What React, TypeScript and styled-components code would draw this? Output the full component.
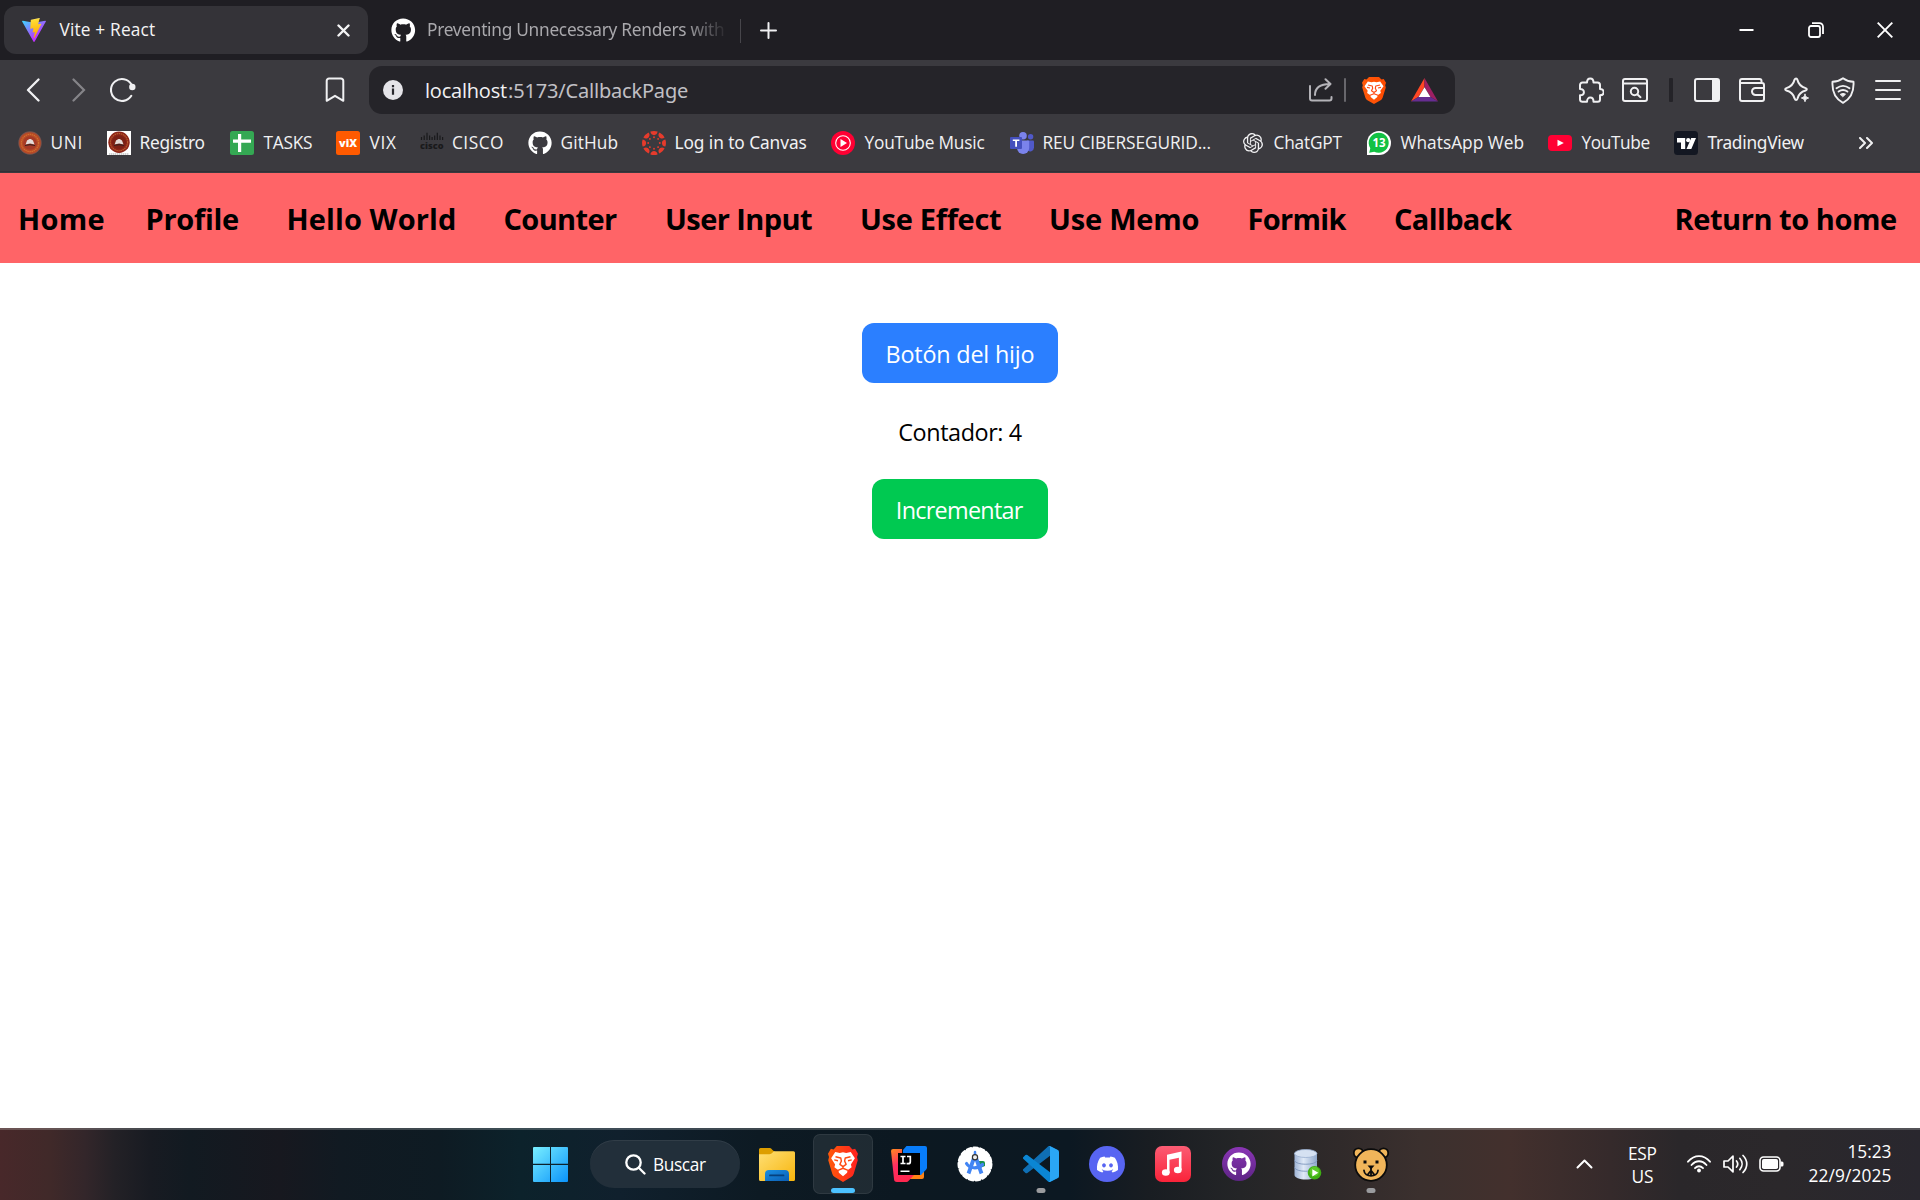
import React, { useLayoutEffect, useRef, useState } from "react";
import styled, { createGlobalStyle } from "styled-components";
import { SiOpenai } from "react-icons/si";
import { FaDiscord, FaGithub } from "react-icons/fa";

const sans = `"Open Sans", "Noto Sans", sans-serif`;
const sansSingleG = `"Noto Sans", "Open Sans", sans-serif`;

const GlobalStyle = createGlobalStyle`
  * { box-sizing: border-box; }
  body { margin: 0; background: #fff; font-family: ${sans}; overflow: hidden; }
  svg { display: block; flex: none; }
`;

/* ---------- text set to an exact visible width ---------- */

const FitBox = styled.span<{ $w: number }>`
  display: block;
  flex: none;
  width: ${(p) => p.$w}px;
  white-space: pre;
`;
const FitRun = styled.span<{ $g?: boolean }>`
  display: inline-block;
  font-family: ${(p) => (p.$g ? sansSingleG : sans)};
`;

function Fit({ text, w, g }: { text: string; w: number; g?: boolean }) {
  const ref = useRef<HTMLSpanElement>(null);
  const [fit, setFit] = useState({ spacing: 0, shift: 0 });
  useLayoutEffect(() => {
    const ctx = document.createElement("canvas").getContext("2d");
    if (!ref.current || !ctx) return;
    const cs = getComputedStyle(ref.current);
    ctx.font = `${cs.fontWeight} ${cs.fontSize} ${cs.fontFamily}`;
    const m = ctx.measureText(text);
    const ink = m.actualBoundingBoxLeft + m.actualBoundingBoxRight;
    setFit({ spacing: (w - ink) / (text.length - 1), shift: m.actualBoundingBoxLeft + 0.5 });
  }, [text, w]);
  return (
    <FitBox $w={w}>
      <FitRun ref={ref} $g={g} style={{ letterSpacing: fit.spacing, marginLeft: fit.shift }}>
        {text}
      </FitRun>
    </FitBox>
  );
}

/* ---------- layout ---------- */

const Screen = styled.div`
  width: 1920px;
  height: 1200px;
  display: flex;
  flex-direction: column;
  background: #fff;
`;

const TabStrip = styled.div`
  height: 60px;
  background: #1f1e23;
  display: flex;
  align-items: center;
  padding-left: 4px;
`;
const Tab = styled.div<{ $active?: boolean; $w: number }>`
  width: ${(p) => p.$w}px;
  height: 48px;
  border-radius: 12px;
  display: flex;
  align-items: center;
  gap: ${(p) => (p.$active ? 13 : 12)}px;
  padding: 0 18px 0 ${(p) => (p.$active ? 18 : 23)}px;
  font-size: 17.3px;
  line-height: 24px;
  background: ${(p) => (p.$active ? "#343338" : "transparent")};
  color: ${(p) => (p.$active ? "#f4f4f5" : "#a9a8ac")};
`;
const TabClose = styled.div`
  margin-left: auto;
`;
const FadeRight = styled.div`
  width: 298px;
  flex: none;
  overflow: hidden;
  mask-image: linear-gradient(to right, #000 86%, transparent 101%);
`;
const TabDivider = styled.div`
  width: 1px;
  height: 24px;
  margin: 1px 19px 0 0;
  background: #47464b;
`;
const WindowButtons = styled.div`
  margin-left: auto;
  display: flex;
  align-items: center;
  padding-right: 1px;
`;
const WindowButton = styled.div`
  width: 69px;
  height: 60px;
  display: grid;
  place-items: center;
`;

const Chrome = styled.div`
  height: 113px;
  background: #3b3a3f;
  display: flex;
  flex-direction: column;
  padding-top: 6px;
`;
const Toolbar = styled.div`
  display: flex;
  align-items: center;
  height: 48px;
  padding-left: 19px;
`;
const ToolSlot = styled.div<{ $w: number; $push?: number }>`
  width: ${(p) => p.$w}px;
  margin-left: ${(p) => p.$push ?? 0}px;
  flex: none;
  display: grid;
  place-items: center;
  color: #f0f0f2;
`;
const AddressBar = styled.div`
  width: 1086px;
  height: 48px;
  flex: none;
  border-radius: 13px;
  background: #252429;
  display: flex;
  align-items: center;
  padding: 0 17px 0 14px;
  font-size: 20px;
  line-height: 26px;
`;
const Url = styled.div`
  display: flex;
  margin-left: 22.500px;
  padding-top: 1px;
  color: #c1c0c5;
`;
const UrlHost = styled.span`
  color: #f1f1f3;
  margin-right: 2px;
`;
const AddressActions = styled.div`
  margin-left: auto;
  display: flex;
  align-items: center;
`;
const Bar = styled.div<{ $w: number; $color: string; $m: string }>`
  width: ${(p) => p.$w}px;
  height: 24px;
  flex: none;
  border-radius: 1px;
  margin: ${(p) => p.$m};
  background: ${(p) => p.$color};
`;
const ToolRight = styled.div`
  display: flex;
  align-items: center;
  margin-left: 119px;
`;

const Bookmarks = styled.div`
  height: 58px;
  display: flex;
  align-items: center;
  padding-left: 18px;
  box-shadow: inset 0 -1px #313036;
  margin-bottom: 1px;
`;
const Bookmark = styled.div<{ $slot: number }>`
  width: ${(p) => p.$slot}px;
  flex: none;
  display: flex;
  align-items: center;
  gap: 9px;
  font-size: 17.3px;
  line-height: 24px;
  color: #f1f1f3;
`;

const PageNav = styled.nav`
  height: 90px;
  background: #ff6467;
  display: flex;
  align-items: center;
  justify-content: space-between;
  padding: 1px 24.500px 0 19.5px;
  font-size: 29px;
  font-weight: 700;
  line-height: 42px;
  color: #000;
`;
const NavLinks = styled.div`
  display: flex;
`;
const NavLink = styled.a<{ $gap?: number }>`
  margin-right: ${(p) => p.$gap ?? 0}px;
`;

const Page = styled.main`
  flex: 1;
  display: flex;
  flex-direction: column;
  align-items: center;
  padding-top: 60px;
  font-size: 23.4px;
  line-height: 36px;
`;
const Button = styled.button<{ $bg: string; $w: number }>`
  width: ${(p) => p.$w}px;
  height: 60px;
  border: 0;
  border-radius: 12px;
  background: ${(p) => p.$bg};
  color: #fff;
  font: inherit;
  display: grid;
  place-items: center;
  padding: 1px 0 0;
`;
const Counter = styled.p`
  margin: 31px 0 29px;
`;

const Taskbar = styled.footer`
  height: 72px;
  border-top: 2px solid rgba(255, 255, 255, 0.2);
  background: linear-gradient(
    to right,
    #48282a 0, #402929 50px, #33262a 85px, #232126 115px, #181b22 150px, #121a21 190px, #17181f 280px,
    #111a22 340px, #0e1b23 440px, #0c222b 520px, #10202d 620px, #0d1a23 760px, #0c1821 900px,
    #0c1822 1070px, #191d22 1150px, #242527 1240px, #302a2a 1340px, #3b302e 1420px,
    #43302d 1510px, #352a2b 1610px, #2a272a 1680px, #2b282b 1780px, #29272e 1920px
  ) border-box;
  display: flex;
  align-items: center;
  padding: 0 30px 2px 520px;
  color: #fff;
`;
const AppSlot = styled.div<{ $active?: boolean; $nudge?: number }>`
  position: relative;
  width: 60px;
  height: 60px;
  flex: none;
  margin-right: 6px;
  padding-left: ${(p) => p.$nudge ?? 0}px;
  border-radius: 7px;
  display: grid;
  place-items: center;
  background: ${(p) => (p.$active ? "rgba(255,255,255,.08)" : "transparent")};
  box-shadow: ${(p) => (p.$active ? "inset 0 0 0 1px rgba(255,255,255,.07)" : "none")};
`;
const Running = styled.i<{ $active?: boolean }>`
  position: absolute;
  bottom: 1px;
  left: 50%;
  transform: translateX(-50%);
  width: ${(p) => (p.$active ? 24 : 9)}px;
  height: 5px;
  border-radius: 3px;
  background: ${(p) => (p.$active ? "#4cc2ff" : "#9a9b9e")};
`;
const SearchPill = styled.div`
  width: 150px;
  height: 48px;
  flex: none;
  margin: 0 7px 0 4px;
  border-radius: 24px;
  background: #222f3a;
  box-shadow: inset 0 1px rgba(255, 255, 255, 0.07);
  display: flex;
  align-items: center;
  gap: 8px;
  padding-left: 34.500px;
  font-size: 17.300px;
`;
const Tray = styled.div`
  margin-left: auto;
  display: flex;
  align-items: center;
  font-size: 17.3px;
`;
const Stack = styled.div<{ $align: string; $lh: number; $m: string }>`
  display: flex;
  flex-direction: column;
  align-items: ${(p) => p.$align};
  line-height: ${(p) => p.$lh}px;
  margin: ${(p) => p.$m};
`;
const TrayIcons = styled.div`
  display: flex;
  align-items: center;
  gap: 11.500px;
`;

/* ---------- icons ---------- */

const Line = ({ w, h = w, sw = 2, children }: { w: number; h?: number; sw?: number; children: React.ReactNode }) => (
  <svg width={w} height={h} viewBox={`0 0 ${w} ${h}`} fill="none" stroke="currentColor" strokeWidth={sw} strokeLinecap="round" strokeLinejoin="round">
    {children}
  </svg>
);

const ViteLogo = () => (
  <svg width="24" height="24" viewBox="0 0 256 257">
    <defs>
      <linearGradient id="va" x1="-.8%" x2="57.6%" y1="7.7%" y2="78.4%"><stop stopColor="#41D1FF" /><stop offset="1" stopColor="#BD34FE" /></linearGradient>
      <linearGradient id="vb" x1="43.4%" x2="50.3%" y1="2.2%" y2="89%"><stop stopColor="#FFEA83" /><stop offset=".08" stopColor="#FFDD35" /><stop offset="1" stopColor="#FFA800" /></linearGradient>
    </defs>
    <path fill="url(#va)" d="M255.153 37.938L134.897 252.976c-2.483 4.44-8.862 4.466-11.382.048L.875 37.958c-2.746-4.814 1.371-10.646 6.827-9.67l120.385 21.517a6.537 6.537 0 0 0 2.322-.004l117.867-21.483c5.438-.991 9.574 4.796 6.877 9.62Z" />
    <path fill="url(#vb)" d="M185.432.063L96.44 17.501a3.268 3.268 0 0 0-2.634 3.014l-5.474 92.456a3.268 3.268 0 0 0 3.997 3.378l24.777-5.718c2.318-.535 4.413 1.507 3.936 3.838l-7.361 36.047c-.495 2.426 1.782 4.5 4.151 3.78l15.304-4.649c2.372-.72 4.652 1.36 4.15 3.788l-11.698 56.621c-.732 3.542 3.979 5.473 5.943 2.437l1.313-2.028l72.516-144.72c1.215-2.423-.88-5.186-3.54-4.672l-25.505 4.922c-2.396.462-4.435-1.77-3.759-4.114l16.646-57.705c.677-2.35-1.37-4.583-3.769-4.113Z" />
  </svg>
);

const Brave = ({ w, h, id }: { w: number; h: number; id: string }) => (
  <svg width={w} height={h} viewBox="0 0 24 28" preserveAspectRatio="none">
    <defs><linearGradient id={id}><stop stopColor="#ff5a0a" /><stop offset="1" stopColor={id === "braveApp" ? "#ff2020" : "#ff4a00"} /></linearGradient></defs>
    <path fill={`url(#${id})`} d="M7 0h10l2.500 2.700 2.200-.5L24 6l-.8 2.500.6 2.500-3.200 10.500a5 5 0 0 1-2 2.600L12 28l-6.600-3.900a5 5 0 0 1-2-2.600L.2 11l.6-2.500L0 6l2.300-3.800 2.200.5z" />
    <path fill="#fff" d="m5.800 4.700 3.700.7 2.500-.6 2.500.6 3.700-.7 3.300 4.800-3.200 4.800.6 2.300-3.300 2.200-.3 2-3.300 2.700-3.300-2.700-.3-2-3.300-2.200.6-2.300-3.200-4.800z" />
    <path fill="none" stroke="#ff4a12" strokeWidth="1.150" strokeLinejoin="round" d="m6 8.300 4.200 1 .5 2.400-1.200 2.600L12 16l2.500-1.700-1.200-2.600.5-2.400 4.200-1M12 16v1.500M8 19l4-1.700 4 1.700M5 10.800l3 .6M19 10.800l-3 .6" />
  </svg>
);

const Bat = () => (
  <svg width="27" height="24" viewBox="0 0 27 24">
    <path d="M13.5 0v9L7.6 18.8 0 23.6z" fill="#ff4724" />
    <path d="M13.5 0 27 23.6l-7.6-4.8L13.5 9z" fill="#9e1f63" />
    <path d="M0 23.6h27l-7.6-4.8H7.6z" fill="#662d91" />
    <path d="m13.5 9.2 5.9 9.8H7.6z" fill="#fff" />
  </svg>
);

const Seal = ({ boxed }: { boxed?: boolean }) => (
  <svg width="24" height="24" viewBox="0 0 24 24">
    {boxed && <path fill="#fff" d="M0 0h24v24H0z" />}
    {!boxed && <circle cx="12" cy="12" r="11.7" fill="#75534f" />}
    <circle cx="12" cy={boxed ? 11.2 : 12} r={boxed ? 10.7 : 10.8} fill={boxed ? "#8d2418" : "#b74a26"} />
    <circle cx="12" cy={boxed ? 11.2 : 12} r="8.6" fill="none" stroke={boxed ? "#b8602f" : "#d0702f"} strokeWidth="1.2" strokeDasharray="1.4 .7" />
    <circle cx="12" cy={boxed ? 11.2 : 12} r="6.8" fill={boxed ? "#7c2115" : "#a63a26"} />
    <path d="M7.6 13.5 9 9.6l2.4-1.5h1.4L15 9.6l1.5 3.9-4.4-.9z" fill="#e4dcd8" />
    <path d="m7 14 5-1 5 1v1l-5-.8-5 .8z" fill="#3d201d" />
    {boxed && <path d="M2 23h20" stroke="#8d8d8d" strokeWidth=".8" strokeDasharray="1.4 .6" />}
  </svg>
);
const Sheets = () => (
  <svg width="24" height="24" viewBox="0 0 24 24"><rect width="24" height="24" rx="2.5" fill="#34a853" /><path d="M8 3h3.200v5.600H21v3.100h-9.800V21H8v-9.300H3V8.600h5z" fill="#fff" /></svg>
);
const Vix = () => (
  <svg width="24" height="24" viewBox="0 0 24 24"><rect width="24" height="24" rx="2.5" fill="#ff5a00" />
    <text x="3" y="15.700" fontFamily="Open Sans" fontWeight="800" fontSize="10" textLength="18" lengthAdjust="spacingAndGlyphs" fill="#fff">viX</text></svg>
);
const Cisco = () => (
  <svg width="24" height="24" viewBox="0 0 24 24" fill="#19191b">
    <path d="M1.500 6v3M4.200 4.500V9M7 4v5M9.600 4.500V9M12.100 6v3M14.700 4.500V9M17.300 4v5M20 4.500V9M22.600 6v3M7 1.800v7M17.300 1.800v7" stroke="#19191b" strokeWidth="1.200" />
    <text x="0" y="18" fontFamily="Open Sans" fontWeight="800" fontSize="9.500" textLength="23.500" lengthAdjust="spacingAndGlyphs">cisco</text>
  </svg>
);
const CanvasLogo = () => (
  <svg width="24" height="24" viewBox="0 0 24 24" fill="#e63b2c">
    {[0, 45, 90, 135, 180, 225, 270, 315].map((a) => (
      <g key={a} transform={`rotate(${a} 12 12)`}>
        <path d="M8.400.600a12 12 0 0 1 7.200 0c-.3 4.700-6.900 4.700-7.200 0z" />
        <circle cx="12" cy="6.200" r=".95" />
      </g>
    ))}
  </svg>
);
const YtMusic = () => (
  <svg width="24" height="24" viewBox="0 0 24 24"><circle cx="12" cy="12" r="12" fill="#ff0033" /><circle cx="12" cy="12" r="7.3" fill="none" stroke="#fff" strokeWidth="1.1" /><path d="m9.500 8.100 6.500 3.900-6.500 3.900z" fill="#fff" /></svg>
);
const Teams = () => (
  <svg width="24" height="24" viewBox="0 0 24 24">
    <circle cx="20.600" cy="5.800" r="2.700" fill="#5059c9" /><path d="M17 9.500h6a1 1 0 0 1 1 1v6a4 4 0 0 1-7 2.600z" fill="#5059c9" />
    <circle cx="13" cy="4.700" r="3.800" fill="#7b83eb" /><path d="M7 9.500h11.200a1 1 0 0 1 1 1V17a6 6 0 0 1-12.200 0z" fill="#7b83eb" />
    <rect y="6" width="12" height="12" rx="1" fill="#4550bd" /><path d="M2.800 8.500h6.600v1.600H7v5.600H5.200v-5.600H2.800z" fill="#fff" />
  </svg>
);
const WhatsApp = () => (
  <svg width="24" height="24" viewBox="0 0 24 24"><path d="M0 24V12A12 12 0 1 1 12 24z" fill="#fff" /><path d="m2.200 21.800 1.100-4.600a10 10 0 1 1 3.900 3.500z" fill="#12c143" />
    <text x="12" y="16" textAnchor="middle" fontFamily="Open Sans" fontWeight="700" fontSize="11.500" fill="#fff">13</text></svg>
);
const YouTube = () => (
  <svg width="24" height="24" viewBox="0 0 24 24"><rect y="4" width="24" height="16" rx="4" fill="#ff0033" /><path d="m9.500 8.700 6.300 3.300-6.300 3.300z" fill="#fff" /></svg>
);
const Trading = () => (
  <svg width="24" height="24" viewBox="0 0 24 24"><rect width="24" height="24" rx="3.500" fill="#131722" /><path d="M3 7h8.200v11H7v-6.500H3zM17.200 7H22l-4.700 11h-4.800z" fill="#fff" /><circle cx="14.200" cy="9.200" r="2.100" fill="#fff" /></svg>
);

const Puzzle = () => (
  <Line w={26}><path d="M2 8a2.500 2.500 0 0 1 2.500-2.500H9C9 0 15.500 0 15.500 5.500h4A2.500 2.500 0 0 1 22 8v4c5 .3 5 6 0 6.300v4.200a2.300 2.300 0 0 1-2.300 2.300h-4.200c0-5.600-6.500-5.600-6.500 0H4.500A2.500 2.500 0 0 1 2 22.500v-4.200c5.200-.3 5.200-6 0-6.300z" /></Line>
);
const WindowSearch = () => (
  <Line w={26} h={24}><rect x="1" y="1" width="24" height="22" rx="2" /><path d="M1 5.500h24" /><circle cx="12.500" cy="13.500" r="3.700" /><path d="m15.500 16.500 3 2.700" /></Line>
);
const SidebarIcon = () => (
  <Line w={26} h={24}><rect x="1" y="1" width="24" height="22" rx="2" /><path d="M19 2h5v20h-5z" fill="currentColor" /></Line>
);
const Wallet = () => (
  <Line w={26} h={24}><path d="M22.500 5V3a2 2 0 0 0-2-2H3a2 2 0 0 0-2 2v18a2 2 0 0 0 2 2h20a2 2 0 0 0 2-2V7a2 2 0 0 0-2-2H2M25 10h-8.500a3.400 3.400 0 0 0 0 7H25" /></Line>
);
const Sparkle = () => (
  <Line w={26} h={26}><path d="M10.500 2.800c.8-1.600 2.400-1.600 2.900 0 1.200 5 3.300 7 8.200 8.300 1.600.5 1.600 1.800 0 2.400-5 1.300-7 3.300-8.200 8.200-.5 1.600-2.100 1.600-2.700 0-1.200-4.900-3.300-6.900-8.300-8.200-1.600-.6-1.600-1.900 0-2.400 4.900-1.300 6.900-3.300 8.100-8.300z" /><path d="M21 17.300c.7 2.600 1 2.900 3.600 3.700-2.600.8-2.900 1.100-3.600 3.700-.7-2.600-1-2.900-3.600-3.700 2.600-.8 2.900-1.100 3.600-3.700z" fill="currentColor" strokeWidth="1" /></Line>
);
const ShieldWifi = () => (
  <Line w={24} h={27} sw={1.900}><path d="M12 1.200c3 2.300 6.500 3.400 10.500 3.600.6 9.700-2.500 17-10.500 21C4 21.800.9 14.500 1.500 4.800 5.500 4.600 9 3.500 12 1.200z" /><path d="M5.500 11.300c4-3 9-3 13 0M7.600 14.600c2.800-2 6-2 8.800 0" /><path d="M9.500 17.200c1.600-1 3.400-1 5 0L12 19.500z" fill="currentColor" strokeWidth="1" /></Line>
);

const StartLogo = () => (
  <svg width="35" height="35" viewBox="0 0 35 35"><defs><linearGradient id="win" gradientUnits="userSpaceOnUse" x1="0" y1="0" x2="35" y2="35"><stop stopColor="#79efff" /><stop offset="1" stopColor="#0a93fb" /></linearGradient></defs>
    <path fill="url(#win)" d="M1 0h16v16.700H0V1a1 1 0 0 1 1-1zM18 0h16a1 1 0 0 1 1 1v15.700H18zM0 18h17v17H1a1 1 0 0 1-1-1zM18 18h17v16a1 1 0 0 1-1 1H18z" /></svg>
);
const Folder = () => (
  <svg width="36" height="33" viewBox="0 0 36 33"><defs><linearGradient id="fo" x1="0" y1="0" x2="1" y2="1"><stop stopColor="#ffdf74" /><stop offset="1" stopColor="#f7b50d" /></linearGradient><linearGradient id="fb" x1="0" y1="0" x2="1" y2="1"><stop stopColor="#1a8fe3" /><stop offset="1" stopColor="#0b5eb4" /></linearGradient></defs>
    <path d="M0 1.500A1.500 1.500 0 0 1 1.500 0H11c1.500 0 3 3.300 4.500 3.300V9H0z" fill="#dd9e00" /><path d="M0 6.200h10.500c2.500 0 3.500-2.900 5-2.900h19A1.500 1.500 0 0 1 36 4.800v26.700a1.500 1.500 0 0 1-1.500 1.500h-33A1.500 1.500 0 0 1 0 31.500z" fill="url(#fo)" />
    <path d="M6 33v-7a4 4 0 0 1 4-4h16a4 4 0 0 1 4 4v7z" fill="url(#fb)" /><path d="M11 27.400h13.500" stroke="#06417d" strokeWidth="1.800" strokeLinecap="round" /></svg>
);
const IntelliJ = () => (
  <svg width="36" height="36" viewBox="0 0 36 36"><defs><linearGradient id="ij" x1="0" y1="0" x2=".4" y2="1"><stop stopColor="#ff8a1f" /><stop offset=".5" stopColor="#ff2d62" /><stop offset="1" stopColor="#ff2850" /></linearGradient></defs>
    <path d="M20 20h13v11a2 2 0 0 1-2 2H18z" fill="#ff8314" /><path d="M15.500 0H34a2 2 0 0 1 2 2v19.500a3 3 0 0 1-.8 2L30 29H12V4z" fill="#087cfa" /><path d="M2 3h9v8l12 18-5.500 6a3 3 0 0 1-2 1H6a3 3 0 0 1-3-3L0 5a2 2 0 0 1 2-2z" fill="url(#ij)" /><path d="M7 7h22v22H7z" />
    <path d="M9.500 10.500h5M12 10.500v7M9.500 17.500h5M16 10.500h3.300v5.200a2 2 0 0 1-2 2H15.600" fill="none" stroke="#fff" strokeWidth="1.700" /><path d="M9.500 24.500h9V26h-9z" fill="#fff" /></svg>
);
const AndroidStudio = () => (
  <svg width="36" height="36" viewBox="0 0 36 36"><circle cx="18" cy="18" r="16.500" fill="#fff" /><circle cx="18" cy="18" r="16.300" fill="none" stroke="#fff" strokeWidth="2.400" strokeDasharray="4.300 2.500" strokeLinecap="round" />
    <path d="M20 15h6a2 2 0 0 1 2 2v3l-5 2z" fill="#17934b" /><g stroke="#4285f4" fill="none" strokeLinecap="round"><path d="m17 12-5.500 15.500M19 12l5.500 15.500" strokeWidth="3.800" strokeLinecap="butt" /><path d="M9.500 17.500c3 5 11 6 16 1" strokeWidth="3.200" /><path d="M18 6v3" strokeWidth="2.500" /></g><circle cx="18" cy="11.300" r="2.600" fill="#eee" stroke="#333" strokeWidth="1.200" /></svg>
);
const VsCode = () => (
  <svg width="36" height="36" viewBox="0 0 100 100"><path fill="#0f6fb5" d="M96.460 10.800 75.860.870a6.230 6.230 0 0 0-7.100 1.210L1.300 63.600a4.170 4.170 0 0 0 .010 6.170l5.500 5a4.170 4.170 0 0 0 5.330.240l81.230-61.600c2.720-2.070 6.630-.130 6.630 3.300v-.250a6.250 6.250 0 0 0-3.540-5.660z" /><path fill="#0b86d4" d="m96.460 89.200-20.600 9.930a6.230 6.230 0 0 1-7.100-1.210L1.300 36.400a4.170 4.170 0 0 1 .010-6.170l5.500-5a4.170 4.170 0 0 1 5.330-.240l81.230 61.600c2.720 2.070 6.630.130 6.630-3.300v.250a6.250 6.250 0 0 1-3.540 5.660z" /><path fill="#2aa6f5" d="M75.860 99.130a6.230 6.230 0 0 1-7.100-1.210c2.300 2.300 6.240.670 6.240-2.590V4.670c0-3.260-3.940-4.900-6.240-2.590a6.230 6.230 0 0 1 7.100-1.210l20.600 9.900A6.250 6.250 0 0 1 100 16.400v67.200c0 2.400-1.370 4.600-3.540 5.630z" /></svg>
);
const Round = styled.div<{ $size: number; $bg: string; $radius?: string }>`
  width: ${(p) => p.$size}px;
  height: ${(p) => p.$size}px;
  border-radius: ${(p) => p.$radius ?? "50%"};
  background: ${(p) => p.$bg};
  display: grid;
  place-items: center;
  color: #fff;
`;
const Note = () => (
  <svg width="36" height="36" viewBox="0 0 36 36" fill="#fff"><path d="M12 8.800 26.500 5.500V24h-2.600V11.700l-9.400 2.100V27H12z" /><ellipse cx="10.800" cy="26.500" rx="3.900" ry="3.300" /><ellipse cx="22.800" cy="24" rx="3.900" ry="3.300" /></svg>
);
const Database = () => (
  <svg width="28" height="31" viewBox="0 0 28 31"><defs><linearGradient id="db"><stop stopColor="#9fb4d6" /><stop offset=".4" stopColor="#dfe9f7" /><stop offset="1" stopColor="#8fa8cc" /></linearGradient></defs>
    <path d="M.500 4v22c0 2.600 5 4.500 11.200 4.500S23 28.600 23 26V4z" fill="url(#db)" /><ellipse cx="11.700" cy="4.500" rx="11.200" ry="4" fill="#d5e1f2" stroke="#9bb0d0" strokeWidth=".8" /><path d="M.500 11.500c1 5 21.500 5 22.500 0M.500 18.500c1 5 21.500 5 22.500 0" fill="none" stroke="#7f97bd" strokeWidth=".9" />
    <circle cx="20.500" cy="23.800" r="6.800" fill="#3faf14" /><circle cx="20.500" cy="22.500" r="4.800" fill="#5cc92b" /><path d="m18.300 20.200 6 3.600-6 3.600z" fill="#fff" /></svg>
);
const Bear = () => (
  <svg width="36" height="35" viewBox="0 0 36 35" fill="#f0b55a" stroke="#0b0b0b" strokeWidth="1.800"><circle cx="5.500" cy="6" r="4.700" /><circle cx="30.500" cy="6" r="4.700" /><circle cx="18" cy="18" r="15.800" />
    <g fill="#0b0b0b" stroke="none"><path d="M10.500 13.500h3v3h-3zM22.500 13.500h3v3h-3zM14.500 18.500h7L18 22.500z" /></g><path d="M18 21.500v6M11 23.500c.5 7 13.500 7 14 0M14.800 27.500 18 23.500l3.200 4" fill="none" strokeLinecap="round" /></svg>
);

/* ---------- data ---------- */

const bookmarks = [
  { icon: <Seal />, text: "UNI", w: 30, slot: 89 },
  { icon: <Seal boxed />, text: "Registro", w: 64, slot: 123, g: true },
  { icon: <Sheets />, text: "TASKS", w: 48.5, slot: 106 },
  { icon: <Vix />, text: "VIX", w: 26.500, slot: 83.500 },
  { icon: <Cisco />, text: "CISCO", w: 50, slot: 108.500 },
  { icon: <FaGithub size={24} color="#fff" />, text: "GitHub", w: 56, slot: 114 },
  { icon: <CanvasLogo />, text: "Log in to Canvas", w: 131, slot: 189, g: true },
  { icon: <YtMusic />, text: "YouTube Music", w: 120, slot: 179 },
  { icon: <Teams />, text: "REU CIBERSEGURID...", w: 167, slot: 231 },
  { icon: <SiOpenai size={20} style={{ margin: 2 }} />, text: "ChatGPT", w: 68, slot: 126 },
  { icon: <WhatsApp />, text: "WhatsApp Web", w: 123, slot: 181 },
  { icon: <YouTube />, text: "YouTube", w: 68, slot: 126 },
  { icon: <Trading />, text: "TradingView", w: 97, slot: 185, g: true },
];

const navLinks = [
  { text: "Home", w: 83.500, gap: 44 },
  { text: "Profile", w: 90.500, gap: 50.500 },
  { text: "Hello World", w: 166.500, gap: 49.500 },
  { text: "Counter", w: 112.500, gap: 50 },
  { text: "User Input", w: 145, gap: 50 },
  { text: "Use Effect", w: 139, gap: 50 },
  { text: "Use Memo", w: 147.500, gap: 51 },
  { text: "Formik", w: 97, gap: 48.500 },
  { text: "Callback", w: 117, gap: 0 },
];

const apps = [
  { icon: <Folder /> },
  { icon: <Brave id="braveApp" w={30} h={36} />, active: true, running: true },
  { icon: <IntelliJ /> },
  { icon: <AndroidStudio /> },
  { icon: <VsCode />, running: true },
  { icon: <Round $size={36} $bg="#5865f2"><FaDiscord size={23} /></Round> },
  { icon: <Round $size={36} $bg="linear-gradient(#fb5c74,#fa2339)" $radius="7px"><Note /></Round> },
  { icon: <Round $size={34} $bg="linear-gradient(#8a35b5,#5d2485)"><FaGithub size={24} /></Round> },
  { icon: <Database />, nudge: 5 },
  { icon: <Bear />, running: true },
];

export default function App() {
  return (
    <Screen>
      <GlobalStyle />
      <TabStrip>
        <Tab $active $w={364}>
          <ViteLogo />
          <Fit text="Vite + React" w={95.500} />
          <TabClose><Line w={13} sw={2.400}><path d="m1.500 1.500 10 10m0-10-10 10" /></Line></TabClose>
        </Tab>
        <Tab $w={372}>
          <FaGithub size={24.500} color="#fff" />
          <FadeRight><Fit text="Preventing Unnecessary Renders with" w={296} g /></FadeRight>
        </Tab>
        <TabDivider />
        <ToolSlot $w={17}><Line w={17}><path d="M8.500 1v15M1 8.500h15" /></Line></ToolSlot>
        <WindowButtons>
          <WindowButton><Line w={15}><path d="M.500 7h14" strokeLinecap="butt" stroke="#fff" /></Line></WindowButton>
          <WindowButton><svg width="16" height="16" viewBox="0 0 16 16" fill="none" stroke="#fff" strokeWidth="1.800"><rect x="1" y="4" width="11" height="11" rx="2" /><path d="M4 1.200h7.500a3.500 3.500 0 0 1 3.500 3.500V12" /></svg></WindowButton>
          <WindowButton><svg width="16" height="16" viewBox="0 0 16 16" stroke="#fff" strokeWidth="1.900"><path d="m.700.700 14.600 14.600m0-14.600L.700 15.300" /></svg></WindowButton>
        </WindowButtons>
      </TabStrip>

      <Chrome>
        <Toolbar>
          <ToolSlot $w={28}><Line w={14} h={24} sw={2.300}><path d="M12.500 1.500 2 12l10.500 10.500" /></Line></ToolSlot>
          <ToolSlot $w={63}><svg width="14" height="24" viewBox="0 0 14 24" fill="none" stroke="#858489" strokeWidth="2.200" strokeLinecap="round"><path d="M1.500 1.500 12 12 1.500 22.500" /></svg></ToolSlot>
          <ToolSlot $w={26}><Line w={26} h={26} sw={2.100}><path d="M21.300 18.800A11 11 0 1 1 21.500 7.500" /><circle cx="22.300" cy="10" r="3.200" fill="currentColor" stroke="none" /></Line></ToolSlot>
          <ToolSlot $w={68} $push={165}><Line w={20} h={26}><path d="M4 1.500h12A2.300 2.300 0 0 1 18.300 3.800v20l-8.300-5-8.300 5v-20A2.300 2.300 0 0 1 4 1.500z" /></Line></ToolSlot>
          <AddressBar>
            <svg width="20" height="20" viewBox="0 0 20 20"><circle cx="10" cy="10" r="10" fill="#e5e4e8" /><path d="M8.900 8.600h2.200v6.200H8.900zM8.900 5h2.200v2.200H8.900z" fill="#29282d" /></svg>
            <Url>
              <UrlHost><Fit text="localhost" w={81} /></UrlHost>
              <Fit text=":5173/CallbackPage" w={179} g />
            </Url>
            <AddressActions>
              <ToolSlot $w={24}><svg width="24" height="24" viewBox="0 0 24 24" fill="none" stroke="#b4b3b8" strokeWidth="2" strokeLinecap="round" strokeLinejoin="round"><path d="M1 8v12.500A2 2 0 0 0 3 22.500h17.500a2 2 0 0 0 2-2V19M6 17C6 10 11 6 21 6M16.500 1.300 21.500 6l-5 4.700" /></svg></ToolSlot>
              <Bar $w={2} $color="#68676c" $m="0 16px 0 11px" />
              <Brave id="braveShield" w={24} h={27} />
              <ToolSlot $w={27} $push={25}><Bat /></ToolSlot>
            </AddressActions>
          </AddressBar>
          <ToolRight>
            <ToolSlot $w={34}><Puzzle /></ToolSlot>
            <ToolSlot $w={54}><WindowSearch /></ToolSlot>
            <Bar $w={4} $color="#242328" $m="0 15px 0 7px" />
            <ToolSlot $w={38}><SidebarIcon /></ToolSlot>
            <ToolSlot $w={52}><Wallet /></ToolSlot>
            <ToolSlot $w={38}><Sparkle /></ToolSlot>
            <ToolSlot $w={54}><ShieldWifi /></ToolSlot>
            <ToolSlot $w={36}><Line w={26} h={22}><path d="M1 2h24M1 11h24M1 20h24" /></Line></ToolSlot>
          </ToolRight>
        </Toolbar>
        <Bookmarks>
          {bookmarks.map((b) => (
            <Bookmark key={b.text} $slot={b.slot}>
              {b.icon}
              <Fit text={b.text} w={b.w} g={b.g} />
            </Bookmark>
          ))}
          <ToolSlot $w={14}><Line w={14} h={12}><path d="m1 1 5 5-5 5M8 1l5 5-5 5" /></Line></ToolSlot>
        </Bookmarks>
      </Chrome>

      <PageNav>
        <NavLinks>
          {navLinks.map((n) => (
            <NavLink key={n.text} $gap={n.gap}><Fit text={n.text} w={n.w} /></NavLink>
          ))}
        </NavLinks>
        <NavLink><Fit text="Return to home" w={219.500} /></NavLink>
      </PageNav>

      <Page>
        <Button $bg="#2b7fff" $w={196}><Fit text="Botón del hijo" w={146} /></Button>
        <Counter><Fit text="Contador: 4" w={122.500} /></Counter>
        <Button $bg="#00c951" $w={176}><Fit text="Incrementar" w={126} /></Button>
      </Page>

      <Taskbar>
        <AppSlot><StartLogo /></AppSlot>
        <SearchPill>
          <Line w={21} sw={2.300}><circle cx="8.500" cy="8.500" r="7.200" /><path d="m13.800 13.800 5.700 5.700" /></Line>
          <Fit text="Buscar" w={52} />
        </SearchPill>
        {apps.map((a, i) => (
          <AppSlot key={i} $active={a.active} $nudge={a.nudge}>
            {a.icon}
            {a.running && <Running $active={a.active} />}
          </AppSlot>
        ))}
        <Tray>
          <Line w={17} h={10}><path d="m1.500 8.500 7-7 7 7" /></Line>
          <Stack $align="center" $lh={23} $m="2px 31px 0 35.500px">
            <Fit text="ESP" w={27.500} />
            <Fit text="US" w={20.500} />
          </Stack>
          <TrayIcons>
            <svg width="24" height="18" viewBox="0 0 24 18" fill="none" stroke="#fff" strokeWidth="1.800" strokeLinecap="round"><path d="M1 6.700c6.500-7.400 15.500-7.400 22 0M4.500 10c4.500-5 10.500-5 15 0M8 13.200c2.500-2.600 5.500-2.600 8 0" /><circle cx="12" cy="15.500" r="1.900" fill="#fff" stroke="none" /></svg>
            <svg width="25" height="20" viewBox="0 0 25 20" fill="none" stroke="#fff" strokeWidth="1.700" strokeLinecap="round" strokeLinejoin="round"><path d="M1 7v6h4l5 4.800V2.200L5 7zM13.500 7c1.500 1.800 1.500 4.200 0 6M16.800 4.300c3 3.400 3 8 0 11.400M20 1.500c5 5 5 12 0 17" /></svg>
            <svg width="25" height="16" viewBox="0 0 25 16"><rect x="1" y="1" width="20" height="14" rx="3.500" fill="none" stroke="#fff" strokeWidth="1.600" /><rect x="3" y="3" width="16" height="10" rx="1.800" fill="#fff" /><path d="M21.500 5.500h1.500a1.500 1.500 0 0 1 1.500 1.500v2a1.500 1.500 0 0 1-1.500 1.500h-1.500z" fill="#fff" /></svg>
          </TrayIcons>
          <Stack $align="flex-end" $lh={24} $m="0 0 0 24px">
            <Fit text="15:23" w={42} />
            <Fit text="22/9/2025" w={82} />
          </Stack>
        </Tray>
      </Taskbar>
    </Screen>
  );
}
